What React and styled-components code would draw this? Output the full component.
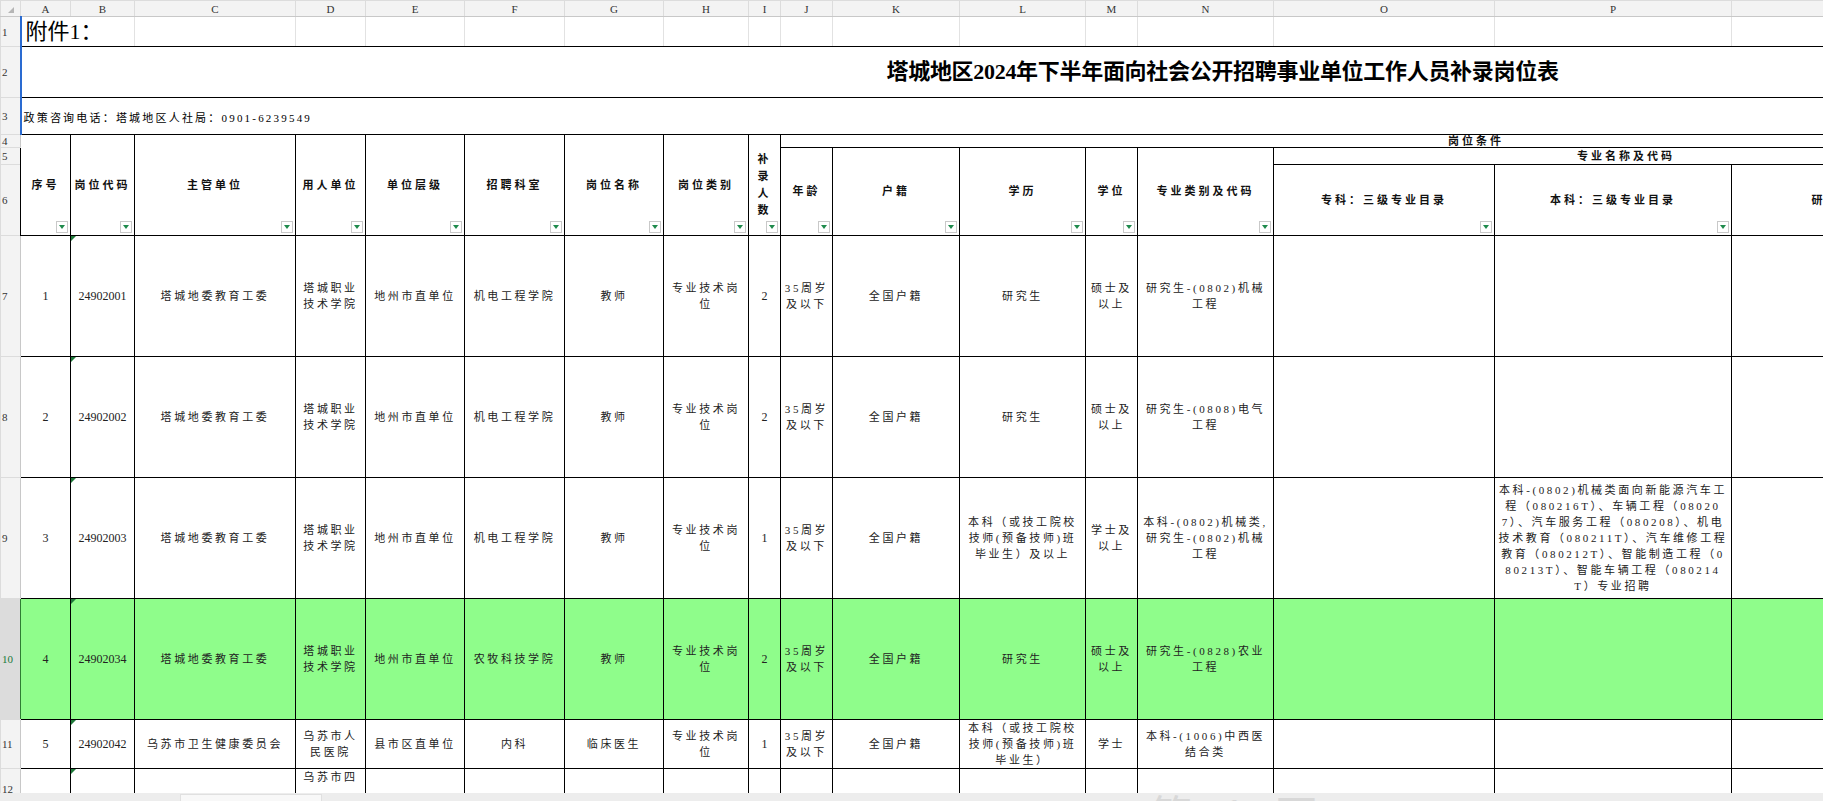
import React from 'react';
import styled, { createGlobalStyle } from 'styled-components';

const Global = createGlobalStyle`
  html, body { margin: 0; padding: 0; background: #fff; }
  body { font-family: "Liberation Serif", "Noto Sans CJK SC", serif; }
`;

const COLS = [20, 50, 64, 161, 70, 99, 100, 99, 85, 32, 52, 127, 126, 52, 136, 221, 237, 300];
const LETTERS = ['', 'A', 'B', 'C', 'D', 'E', 'F', 'G', 'H', 'I', 'J', 'K', 'L', 'M', 'N', 'O', 'P', 'Q'];

const rows = [
  ['1', '24902001', '塔城地委教育工委', '塔城职业技术学院', '地州市直单位', '机电工程学院', '教师', '专业技术岗位', '2', '35周岁及以下', '全国户籍', '研究生', '硕士及以上', '研究生-(0802)机械工程', '', ''],
  ['2', '24902002', '塔城地委教育工委', '塔城职业技术学院', '地州市直单位', '机电工程学院', '教师', '专业技术岗位', '2', '35周岁及以下', '全国户籍', '研究生', '硕士及以上', '研究生-(0808)电气工程', '', ''],
  ['3', '24902003', '塔城地委教育工委', '塔城职业技术学院', '地州市直单位', '机电工程学院', '教师', '专业技术岗位', '1', '35周岁及以下', '全国户籍', '本科（或技工院校技师(预备技师)班毕业生）及以上', '学士及以上', '本科-(0802)机械类,研究生-(0802)机械工程', '', '本科-(0802)机械类面向新能源汽车工程（080216T）、车辆工程（080207）、汽车服务工程（080208）、机电技术教育（080211T）、汽车维修工程教育（080212T）、智能制造工程（080213T）、智能车辆工程（080214T）专业招聘'],
  ['4', '24902034', '塔城地委教育工委', '塔城职业技术学院', '地州市直单位', '农牧科技学院', '教师', '专业技术岗位', '2', '35周岁及以下', '全国户籍', '研究生', '硕士及以上', '研究生-(0828)农业工程', '', ''],
];

const Page = styled.div`
  width: 1823px;
  height: 801px;
  display: flex;
  flex-direction: column;
  overflow: hidden;
  position: relative;
`;

const Viewport = styled.div`
  flex: 1;
  overflow: hidden;
`;

const Sheet = styled.table`
  table-layout: fixed;
  border-collapse: collapse;
  width: ${COLS.reduce((a, b) => a + b, 0)}px;
`;

const ColHead = styled.th`
  height: 15px;
  padding: 0;
  background: #f3f3f3;
  border: 1px solid #dcdcdc;
  border-bottom: 1px solid #c8c8c8;
  font: normal 11px "Liberation Serif", serif;
  color: #333;
  text-align: center;
`;

const Corner = styled.span`
  display: inline-block;
  border-bottom: 6px solid #b5b5b5;
  border-left: 6px solid transparent;
`;

const RowHead = styled.td`
  padding: 0;
  background: ${p => (p.$active ? '#dcdcdc' : '#f3f3f3')};
  border: 1px solid #dcdcdc;
  border-right: 1px solid ${p => (p.$active ? '#2e7d32' : '#c8c8c8')};
  font: 11px/10px "Liberation Serif", serif;
  color: ${p => (p.$active ? '#1b7a3a' : '#333')};
  text-align: left;
  padding-left: 1px;
  height: ${p => p.$h}px;
  overflow: hidden;
`;

const Cell = styled.td`
  padding: 0 3px;
  height: ${p => p.$h || 0}px;
  border: 1px solid #000;
  background: ${p => (p.$green ? '#8ffd8b' : '#fff')};
  font-size: 11px;
  line-height: 16px;
  letter-spacing: 2.6px;
  color: #222;
  text-align: center;
  vertical-align: ${p => p.$va || 'middle'};
  word-break: break-all;
  position: relative;
  overflow: hidden;
`;

const NumCell = styled(Cell)`
  letter-spacing: 0;
  font-size: 12px;
  padding: 0 1px;
`;

const LightCell = styled.td`
  border: 1px solid #e2e2e2;
  border-bottom: 1px solid #000;
  padding: 0;
`;

const FirstNote = styled.td`
  border-left: 2px solid #2a6bd1;
  border-bottom: 1px solid #000;
  padding: 0 0 0 4px;
  font: 22px/26px "Liberation Serif", "Noto Sans CJK SC", serif;
  white-space: nowrap;
  overflow: visible;
`;

const TitleCell = styled.td`
  border-bottom: 1px solid #000;
  border-left: 2px solid #2a6bd1;
  padding: 0 0 0 865px;
  font: bold 22px/26px "Liberation Serif", "Noto Sans CJK SC", serif;
  letter-spacing: -0.3px;
  white-space: nowrap;
  text-align: left;
`;

const InfoCell = styled.td`
  border-left: 2px solid #2a6bd1;
  border-bottom: 1px solid #000;
  padding: 4px 0 0 2px;
  font-size: 11px;
  line-height: 14px;
  letter-spacing: 2.2px;
  white-space: nowrap;
  text-align: left;
`;

const HeadCell = styled(Cell)`
  font-weight: bold;
  letter-spacing: 3px;
  line-height: 17px;
  color: #111;
`;

const SpanHead = styled(HeadCell)`
  text-align: left;
  padding-left: ${p => p.$pl}px;
  white-space: nowrap;
  line-height: 11px;
`;

const Filter = styled.span`
  position: absolute;
  right: 2px;
  bottom: 2px;
  width: 10px;
  height: 10px;
  border: 1px solid #c9c9c9;
  background: #fff;
  &::after {
    content: '';
    position: absolute;
    left: 2px;
    top: 3px;
    border-left: 3px solid transparent;
    border-right: 3px solid transparent;
    border-top: 4px solid #1f8a4c;
  }
`;

const TextMark = styled.span`
  position: absolute;
  left: 0;
  top: 0;
  border-top: 5px solid #1f7a3a;
  border-right: 5px solid transparent;
`;

const Scrollbar = styled.div`
  height: 8px;
  background: #ededed;
  display: flex;
  padding-left: 180px;
`;

const Thumb = styled.div`
  width: 140px;
  height: 6px;
  margin-top: 1px;
  background: #f8f8f8;
  border: 1px solid #e0e0e0;
`;

const Watermark = styled.div`
  position: absolute;
  left: 1150px;
  top: 782px;
  font: 42px "Noto Sans CJK SC", sans-serif;
  color: #d8d8d8;
  letter-spacing: 30px;
  pointer-events: none;
`;

const H = ({ children, f = true, rs, cs, h }) => (
  <HeadCell rowSpan={rs} colSpan={cs} $h={h}>
    {children}
    {f && <Filter />}
  </HeadCell>
);

const DataRow = ({ n, r, h, green, top }) => (
  <tr>
    <RowHead $h={h} $active={green}>{n}</RowHead>
    {r.map((v, i) => {
      const num = i === 1 || i === 8 || i === 0;
      const C = num ? NumCell : Cell;
      return (
        <C key={i} $green={green} $h={h} $va={top ? 'top' : 'middle'}>
          {i === 1 && <TextMark />}
          {v}
        </C>
      );
    })}
    <Cell $green={green} $h={h} />
  </tr>
);

export default function App() {
  return (
    <Page>
      <Global />
      <Viewport>
        <Sheet>
          <colgroup>
            {COLS.map((w, i) => <col key={i} style={{ width: w }} />)}
          </colgroup>
          <tbody>
            <tr>
              {LETTERS.map((l, i) => <ColHead key={i}>{i === 0 ? <Corner /> : l}</ColHead>)}
            </tr>
            <tr>
              <RowHead $h={29}>1</RowHead>
              <FirstNote colSpan={2}>附件1：</FirstNote>
              {COLS.slice(3).map((_, i) => <LightCell key={i} />)}
            </tr>
            <tr>
              <RowHead $h={50}>2</RowHead>
              <TitleCell colSpan={17}>塔城地区2024年下半年面向社会公开招聘事业单位工作人员补录岗位表</TitleCell>
            </tr>
            <tr>
              <RowHead $h={36}>3</RowHead>
              <InfoCell colSpan={17}>政策咨询电话：塔城地区人社局：0901-6239549</InfoCell>
            </tr>
            <tr>
              <RowHead $h={12}>4</RowHead>
              <H rs={3}>序号</H>
              <H rs={3}>岗位代码</H>
              <H rs={3}>主管单位</H>
              <H rs={3}>用人单位</H>
              <H rs={3}>单位层级</H>
              <H rs={3}>招聘科室</H>
              <H rs={3}>岗位名称</H>
              <H rs={3}>岗位类别</H>
              <H rs={3}>补录人数</H>
              <SpanHead colSpan={8} $pl={667}>岗位条件</SpanHead>
            </tr>
            <tr>
              <RowHead $h={16}>5</RowHead>
              <H rs={2}>年龄</H>
              <H rs={2}>户籍</H>
              <H rs={2}>学历</H>
              <H rs={2}>学位</H>
              <H rs={2}>专业类别及代码</H>
              <SpanHead colSpan={3} $pl={303}>专业名称及代码</SpanHead>
            </tr>
            <tr>
              <RowHead $h={70}>6</RowHead>
              <H>专科：三级专业目录</H>
              <H>本科：三级专业目录</H>
              <H f={false}>研究生：三级专业目录</H>
            </tr>
            {rows.map((r, i) => (
              <DataRow key={i} n={7 + i} r={r} h={120} green={i === 3} />
            ))}
            <DataRow n={11} h={44} r={['5', '24902042', '乌苏市卫生健康委员会', '乌苏市人民医院', '县市区直单位', '内科', '临床医生', '专业技术岗位', '1', '35周岁及以下', '全国户籍', '本科（或技工院校技师(预备技师)班毕业生）', '学士', '本科-(1006)中西医结合类', '', '']} />
            <DataRow n={12} h={40} top r={['', '', '', '乌苏市四', '', '', '', '', '', '', '', '', '', '', '', '']} />
          </tbody>
        </Sheet>
      </Viewport>
      <Watermark>第1页</Watermark>
      <Scrollbar>
        <Thumb />
      </Scrollbar>
    </Page>
  );
}
